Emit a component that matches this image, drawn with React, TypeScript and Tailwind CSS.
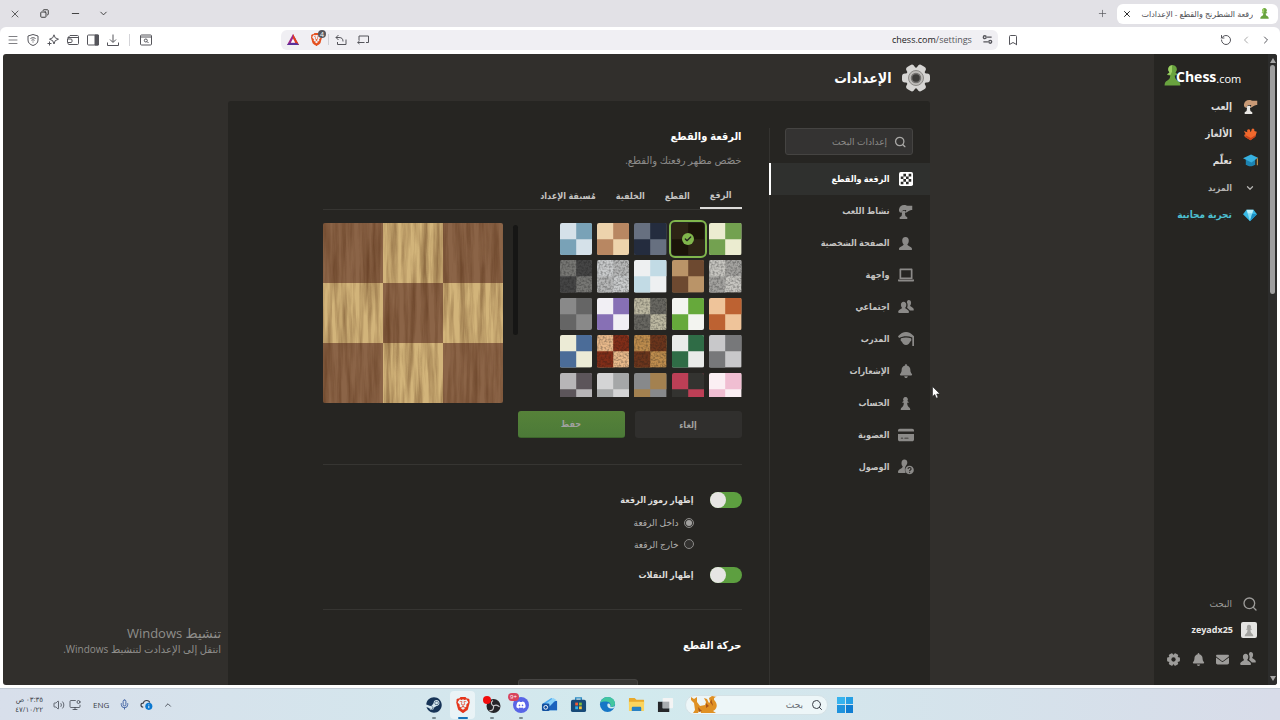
import type { ReactNode } from "react";
import {
    Bookmark,
    Check,
    ChevronDown,
    ChevronLeft,
    ChevronRight,
    ChevronUp,
    Copy,
    Menu,
    Mic,
    Minus,
    MonitorDot,
    Plus,
    RotateCcw,
    Search,
    Volume2,
    X,
} from "lucide-react";
import { FaBell, FaBrave, FaCreditCard, FaDiscord, FaEnvelope, FaSteam } from "react-icons/fa6";

// headings and links use the narrower bold cut
const bold = "font-['Open_Sans','DejaVu_Sans_Condensed',sans-serif] font-bold";

const HandPawn = ({ hand = "currentColor", pawn = "currentColor" }: { hand?: string; pawn?: string }) => (
    <svg viewBox="0 0 16 16" className="size-[15px]">
        <path fill={hand} d="M1 6C1.300 3 3.600 1 6.500 1c2 0 3 .8 5 .8h3.700v4.600c-2 0-3 .6-4.200 1.400L9 9c-.9.500-1.500-.3-1-1l1-1.700H5.500L3.400 9C2.400 9.700.900 8 1 6z" />
        <path fill={pawn} d="M5 7.200h2.400l.8 1.800-.8.800.5 3 2 1.300V16H1.800v-1.900l2-1.300.5-3-.8-.8z" />
    </svg>
);

const Friends = () => (
    <svg viewBox="0 0 16 16" className="size-4" fill="currentColor">
        <path d="M5.600 2.800c1.700 0 2.800 1.300 2.700 3.100-.1 1.300-.5 2.200-1.100 2.800.2 1.600 3.800 1.600 3.800 4.300 0 .6-.3 1-.9 1H1.100c-.6 0-.9-.4-.9-1 0-2.700 3.600-2.700 3.800-4.300-.6-.6-1-1.500-1.100-2.800 0-1.800 1-3.100 2.700-3.100z" />
        <path d="M10.600 1c1.600 0 2.600 1.200 2.500 2.900 0 1.100-.4 2-1 2.600.3 1.500 3.700 1.700 3.700 4.200 0 .6-.3.9-.8.9h-3.100c-.7-1.600-2.400-2-2.800-2.900.6-1.400.9-3.300-.2-5.100C9 2 9.500 1 10.600 1z" />
    </svg>
);

const Person = () => (
    <svg viewBox="0 0 16 16" className="size-[15px]" fill="currentColor">
        <path d="M8 1c2.300 0 3.700 1.600 3.500 4-.1 1.800-.7 3-1.500 3.800.1 2.200 5 2.200 5 5.400 0 .5-.2.800-.7.800H1.700c-.5 0-.7-.3-.7-.8 0-3.200 4.900-3.200 5-5.400C5.200 8 4.600 6.800 4.500 5 4.300 2.600 5.700 1 8 1z" />
    </svg>
);

const LaptopIcon = () => (
    <svg viewBox="0 0 16 16" className="size-4" fill="currentColor">
        <path fillRule="evenodd" d="M2.500 1.500h11c.6 0 1 .4 1 1V12h-13V2.500c0-.6.4-1 1-1zM3.200 3.200v7.200h9.600V3.200z" />
        <path d="M0 12.500h16v1c0 .7-.4 1-1 1H1c-.6 0-1-.3-1-1z" />
    </svg>
);

const Coach = () => (
    <svg viewBox="0 0 16 16" className="size-4" fill="currentColor">
        <path d="M0 5.200C2.500 2.500 5.300 1 8 1s5.500 1.500 8 4.200V15h-1.700V6.600C10 4.800 5.500 4.900 1 7z" />
        <path d="M3 7.300c3.400-1 6.600-1 10 0 .8 1.600.3 3-1 3.500-.4 2-2 3.200-4 3.200s-3.600-1.200-4-3.200c-1.300-.5-1.800-1.900-1-3.500z" />
    </svg>
);

const Access = () => (
    <svg viewBox="0 0 16 16" className="size-4" fill="currentColor">
        <path d="M6.400.5c1.800 0 3 1.300 2.900 3.100 0 1.200-.5 2.200-1.200 2.900C6.800 8 6.300 11 7.600 14H1C.3 14 0 13.600 0 13c0-3.400 4.400-3 4.700-5.600-.7-.7-1.200-1.700-1.200-2.900C3.400 1.800 4.600.5 6.400.5z" />
        <circle cx="11.500" cy="11" r="4.300" />
        <path d="M10 10c0-2 3.100-1.900 3.100-.1 0 1.100-1.500 1-1.500 2.100m0 .8v1" fill="none" stroke="#262522" strokeWidth="1.100" />
    </svg>
);

const BoardIcon = () => (
    <svg viewBox="0 0 16 16" className="size-[14px]">
        <rect width="16" height="16" rx="2" fill="#fff" />
        <path fill="#2b2b28" d="M5 2h3v3H5zM11 2h3v3h-3zM2 5h3v3H2zM8 5h3v3H8zM5 8h3v3H5zM11 8h3v3h-3zM2 11h3v3H2zM8 11h3v3H8z" />
    </svg>
);

const SmallPawn = ({ className }: { className?: string }) => (
    <svg viewBox="0 0 12 16" className={className} fill="currentColor">
        <path d="M6 1a2.600 2.600 0 0 1 2 4.300l1.400 1v.9H7.800c.1 2.500.7 3.900 2 4.900.9.700 1.400 1.500 1.400 2.900H.8c0-1.400.5-2.200 1.400-2.900 1.300-1 1.900-2.400 2-4.900H2.600v-.9l1.400-1A2.600 2.600 0 0 1 6 1z" />
    </svg>
);

const Pawn = ({ className }: { className?: string }) => (
    <svg viewBox="0 0 18 22" className={className}>
        <path
            fill="#69a33f"
            d="M9 0a4.600 4.600 0 0 1 3.200 8l2.500 1.700c0 .8-.5 1.200-3.300 1.200.1 2.600.8 4.100 3 5.300 1.900 1 3 2.500 3 5.300H.6c0-2.800 1.100-4.300 3-5.300 2.200-1.200 2.900-2.700 3-5.300-2.800 0-3.300-.4-3.300-1.200L5.800 8A4.600 4.600 0 0 1 9 0z"
        />
        <path fill="#9bcf63" d="M8.500.1A4.600 4.600 0 0 0 5.800 8L3.300 9.700l3.500.7L8.500 7z" />
    </svg>
);

const Gear = () => (
    <svg viewBox="0 0 28 28" className="size-[15px]" fill="currentColor">
        {[30, 90, 150].map((angle) => (
            <rect key={angle} x="10" y="2" width="8" height="24" rx="2" transform={`rotate(${angle} 14 14)`} />
        ))}
        <circle cx="14" cy="14" r="9" />
        <circle cx="14" cy="14" r="4" fill="#262522" />
    </svg>
);

const GearBadge = () => (
    <svg viewBox="0 0 28 28" className="size-7">
        {[30, 90, 150].map((angle) => (
            <rect key={angle} x="9.500" y="0" width="9" height="28" rx="3" fill="#d6d5d3" transform={`rotate(${angle} 14 14)`} />
        ))}
        <circle cx="14" cy="14" r="10.500" fill="#d6d5d3" />
        <circle cx="14" cy="14" r="7.500" fill="#bdbbb8" stroke="#8c8a87" />
        <circle cx="14" cy="14" r="4.500" fill="#3c3b39" stroke="#757371" strokeWidth="1.500" />
    </svg>
);

const PuzzleIcon = () => (
    <svg viewBox="0 0 16 16" className="size-[14px]">
        <path fill="#f0682d" d="M1 4.500 5 6C4 3.500 5.500 2 7 2.600c1.300.5 1.400 1.900 1 3l1.600-1c-.2-2 1-3.200 2.400-2.700 1.200.4 1.300 1.700.8 2.800l3 .8L14 11l-5.500 4-6-3.500C.8 10 1.400 8 3 8.200z" />
        <path fill="#c8431b" d="m2.500 11.500 6 3.500L14 11l.6-2L9 12.500 3 9.500z" />
    </svg>
);

const LearnIcon = () => (
    <svg viewBox="0 0 16 16" className="size-[15px]">
        <path fill="#1d83b0" d="M3 7v5c2.500 3 7.500 3 10 0V7z" />
        <path fill="#37b1e0" d="M0 5.500 8.500 1.500 16 5l-7 5z" />
        <path d="M15.300 5.500V13" stroke="#c69648" strokeWidth="1.200" />
    </svg>
);

const Diamond = () => (
    <svg viewBox="0 0 16 16" className="size-[14px]">
        <path fill="#38b8e4" d="M4 2h8l4 5-8 8-8-8z" />
        <path fill="#b9f0fc" d="M4 2h8l-1.500 4.500h-5z" />
        <path fill="#83def5" d="M5.500 6.500h5L8 15z" />
        <path fill="#1d8fc4" d="m10.500 6.500 5.500.5-8 8z" />
    </svg>
);

const mainLinks = [
    { label: "إلعب", icon: <HandPawn hand="#c99a76" pawn="#e9e7e4" /> },
    { label: "الألغاز", icon: <PuzzleIcon /> },
    { label: "تعلّم", icon: <LearnIcon /> },
    { label: "المزيد", icon: <ChevronDown className="size-[10px]" strokeWidth={3} />, tone: "text-[9px] text-[#b5b4b2]" },
    { label: "تجربة مجانية", icon: <Diamond />, tone: "text-[10px] text-[#4dbfd0]" },
];

const settingsLinks = [
    { label: "الرقعة والقطع", icon: <BoardIcon /> },
    { label: "نشاط اللعب", icon: <HandPawn /> },
    { label: "الصفحة الشخصية", icon: <Person /> },
    { label: "واجهة", icon: <LaptopIcon /> },
    { label: "اجتماعي", icon: <Friends /> },
    { label: "المدرب", icon: <Coach /> },
    { label: "الإشعارات", icon: <FaBell className="size-[14px]" /> },
    { label: "الحساب", icon: <SmallPawn className="h-[15px] w-[11px]" /> },
    { label: "العضوية", icon: <FaCreditCard className="size-4" /> },
    { label: "الوصول", icon: <Access /> },
];

const tabs = ["الرقع", "القطع", "الخلفية", "مُسبقة الإعداد"];

// [name, top-left and bottom-right colour, the other colour, grainy]
const boards: [string, string, string, boolean?][] = [
    ["أخضر", "#ebecd0", "#73a150"],
    ["خشب داكن", "#2d2415", "#1b1409"],
    ["ليلي", "#677080", "#242c3e"],
    ["بني", "#edd3ac", "#b88762"],
    ["جليد", "#d5e1e9", "#79a2b7"],
    ["صحيفة", "#c6c5c0", "#a3a29f", true],
    ["جوز", "#ba9468", "#6d4930"],
    ["سماء", "#eef0f1", "#c2dbe5"],
    ["رخام فاتح", "#c9cbcc", "#b5b6b6", true],
    ["جرافيت", "#777774", "#454545", true],
    ["برتقالي", "#efc49a", "#bd6232"],
    ["ليموني", "#f3f4f0", "#66a93b"],
    ["حجر", "#bcb8a1", "#686761", true],
    ["أرجواني", "#f1eff4", "#8770b5"],
    ["رمادي", "#898989", "#656565"],
    ["معدن", "#c8c8ca", "#77787a"],
    ["ملعب", "#e9ebe9", "#2f6c46"],
    ["خشب", "#bd8c4d", "#6b351c", true],
    ["برغندي", "#e8b98a", "#812d18", true],
    ["أزرق", "#ecebd6", "#4b6c98"],
    ["وردي", "#fbeff3", "#f0bed2"],
    ["داما", "#bd3f56", "#333330"],
    ["برونز", "#87898b", "#a38150"],
    ["زجاج", "#d4d4d5", "#a5a7a8"],
    ["ظلال", "#b7b5b7", "#5c555a"],
];

function Swatch({ light, dark, grain }: { light: string; dark: string; grain?: boolean }) {
    return (
        <svg viewBox="0 0 32 32" className="block w-full rounded-[2px]">
            <rect width="32" height="32" fill={light} />
            <path d="M16 0h16v16H16zM0 16h16v16H0z" fill={dark} />
            {grain && <rect width="32" height="32" filter="url(#grain)" opacity="0.3" />}
        </svg>
    );
}

function WoodBoard() {
    return (
        <svg viewBox="0 0 180 180" className="block w-[180px] shrink-0 rounded-[2px]">
            <defs>
                <filter id="wood" x="0" y="0" width="100%" height="100%" colorInterpolationFilters="sRGB">
                    <feTurbulence type="fractalNoise" baseFrequency="0.16 0.012" numOctaves="4" seed="7" />
                    <feColorMatrix values="0 0 0 0 0.3  0 0 0 0 0.15  0 0 0 0 0.05  2 0 0 0 -0.75" />
                </filter>
                <filter id="grain" x="0" y="0" width="100%" height="100%" colorInterpolationFilters="sRGB">
                    <feTurbulence type="fractalNoise" baseFrequency="0.5" numOctaves="2" seed="3" />
                    <feColorMatrix values="0 0 0 0 0.1  0 0 0 0 0.1  0 0 0 0 0.1  3 0 0 0 -1.2" />
                </filter>
            </defs>
            {[0, 1, 2, 3, 4, 5, 6, 7, 8].map((i) => {
                const x = (i % 3) * 60;
                const y = Math.floor(i / 3) * 60;
                return <rect key={i} x={x} y={y} width="60" height="60" fill={i % 2 ? "#d2b47a" : "#8b6447"} />;
            })}
            <rect width="180" height="180" filter="url(#wood)" opacity="0.5" />
        </svg>
    );
}

function BrowserChrome() {
    return (
        <header className="bg-[#e2e1e6] text-[#55555b]">
            <div className="flex h-[27px] items-center justify-between">
                <div className="flex items-center">
                    <div className="ms-[2px] flex h-5 w-[161px] items-center rounded-md bg-white ps-2 pe-[5px]">
                        <Pawn className="h-[11px] w-[11px]" />
                        <span className="ms-[6px] flex-1 truncate text-[8px] text-[#4b4b50]">رقعة الشطرنج والقطع - الإعدادات</span>
                        <button aria-label="إغلاق التبويب">
                            <X className="size-[10px] text-black" />
                        </button>
                    </div>
                    <button aria-label="تبويب جديد" className="ms-[9px]">
                        <Plus className="size-[11px]" strokeWidth={1.5} />
                    </button>
                </div>
                <div dir="ltr" className="flex items-center ps-[9px] text-[#333]">
                    <button aria-label="إغلاق" className="w-[31px]"><X className="size-[12px]" strokeWidth={1.5} /></button>
                    <button aria-label="استعادة" className="w-[30px]"><Copy className="size-[9px] -scale-x-100" strokeWidth={2.5} /></button>
                    <button aria-label="تصغير" className="w-[28px]"><Minus className="size-[11px]" /></button>
                    <button aria-label="القائمة"><ChevronDown className="size-[11px]" /></button>
                </div>
            </div>
            <div className="flex h-[27px] items-center rounded-t-md bg-white pb-[2px]">
                <div className="flex flex-1 items-center gap-2 ps-2">
                    <ChevronRight className="size-3" />
                    <ChevronLeft className="size-3 text-[#aaa]" />
                    <RotateCcw className="size-3" />
                    <Bookmark className="ms-auto me-[9px] size-3" />
                </div>
                <div className="flex h-5 w-[56%] items-center rounded-md bg-[#f0eff3] ps-[5px] pe-[6px]">
                    <svg viewBox="0 0 12 12" className="size-[11px]" fill="none" stroke="currentColor" strokeWidth="1.400">
                        <circle cx="3" cy="3.500" r="1.600" />
                        <circle cx="9" cy="8.500" r="1.600" />
                        <path d="M5.500 3.500h5M1.500 8.500h5" />
                    </svg>
                    <span dir="ltr" className="me-[10px] text-[9px] text-[#55555a]">
                        <span className="text-[#222]">chess.com</span>/settings
                    </span>
                    <div dir="ltr" className="me-auto flex items-center text-[#55555b]">
                        <svg viewBox="0 0 12 12" className="size-3">
                            <path d="M6 0 12 11H0z" fill="#a1278a" />
                            <path d="M6 0 12 11H9.500L6 4.500z" fill="#e0401c" />
                            <path d="m6 4.500 2.200 4.300H3.800z" fill="#fff" />
                            <path d="M0 11h12l-2-2H2z" fill="#59309a" />
                        </svg>
                        <span className="relative ms-[11px] me-[5px] block">
                            <FaBrave className="size-[13px] text-[#e5501f]" />
                            <span className="absolute -top-[3px] -right-[3px] flex size-[8px] items-center justify-center rounded-full bg-[#56565c] text-[7px] leading-none text-white">4</span>
                        </span>
                        <span className="h-[11px] w-px bg-[#cfcfd4]" />
                        <svg viewBox="0 0 12 12" className="ms-[6px] size-3" fill="none" stroke="currentColor">
                            <path d="M3.500 1 1 3.500 3.500 6M1 3.500h3c3 0 4 1.500 4 4M2.500 8v2.500H11V5.500" />
                        </svg>
                        <svg viewBox="0 0 12 12" className="ms-[10px] size-3" fill="none" stroke="currentColor">
                            <path d="M2 6.500V2h9.500v6.500H9M.5 8.500h7M2.500 7 .800 8.500 2.500 10" />
                        </svg>
                    </div>
                </div>
                <div dir="ltr" className="flex flex-1 items-center gap-2 ps-[7px]">
                    <Menu className="size-3" strokeWidth={1.5} />
                    <svg viewBox="0 0 12 12" className="size-3" fill="none" stroke="currentColor">
                        <path d="M6 .5 11 2v4c0 3-2 4.500-5 5.500C3 10.500 1 9 1 6V2zM3.500 4.500c1.500-1 3.500-1 5 0M4.500 6.300c1-.6 2-.6 3 0M6 7.500v1" />
                    </svg>
                    <svg viewBox="0 0 12 12" className="size-3" fill="none" stroke="currentColor">
                        <path d="m7 .8 1.200 3 3.300 1.400-3.300 1.500L7 10 5.700 6.700 2.500 5.200l3.200-1.400zM2.500 7.500v4M.5 9.500h4" />
                    </svg>
                    <svg viewBox="0 0 12 12" className="size-3" fill="none" stroke="currentColor">
                        <path d="M1 5V3.500L3 1.500h7.500c.6 0 1 .4 1 1v7c0 .6-.4 1-1 1H2c-.6 0-1-.4-1-1V8.500M1 3.500h10M.500 5H4c.6 0 1 .4 1 1v1.500c0 .6-.4 1-1 1H.5z" />
                    </svg>
                    <svg viewBox="0 0 12 12" className="size-3" fill="none" stroke="currentColor">
                        <rect x=".5" y="1" width="11" height="10" rx="1" />
                        <path d="M8 1h3.500v10H8z" fill="currentColor" />
                    </svg>
                    <svg viewBox="0 0 12 12" className="size-3" fill="none" stroke="currentColor">
                        <path d="M6 .5v7.500M3 5.500l3 3 3-3M.5 8.500v3h11v-3" />
                    </svg>
                    <span className="mx-[2px] h-3 w-px bg-[#d4d4d8]" />
                    <svg viewBox="0 0 12 12" className="size-3" fill="none" stroke="currentColor">
                        <rect x=".5" y="1" width="11" height="10" rx="1" />
                        <path d="M1 3h10" />
                        <circle cx="5.800" cy="6.500" r="1.500" />
                        <path d="m7 7.500 1.500 1.500" />
                    </svg>
                </div>
            </div>
        </header>
    );
}

function MainSidebar() {
    return (
        <aside className="flex w-[114px] shrink-0 flex-col bg-[#262522] text-[#dddcda]">
            <a href="#home" dir="ltr" className="mt-[9px] flex h-[24px] items-center ps-[10px] text-white">
                <Pawn className="h-[21px] w-[17px]" />
                <span className="-ms-[5px] pt-1 text-[14px] leading-none font-bold">Chess</span>
                <span className="pt-[6px] text-[11px] leading-none">.com</span>
            </a>
            <nav className="mt-[6px]">
                {mainLinks.map((link) => (
                    <a key={link.label} href="#main" className={`flex h-[27px] items-center gap-[10px] ps-[10px] ${bold} ${link.tone ?? "text-[10px]"}`}>
                        <span className="flex w-4 justify-center">{link.icon}</span>
                        {link.label}
                    </a>
                ))}
            </nav>
            <div className="mt-auto mb-[18px] text-[#9d9c9a]">
                <a href="#search" className="flex h-[26px] items-center gap-[10px] ps-[10px] text-[9px]">
                    <Search className="size-4" />
                    البحث
                </a>
                <a href="#profile" className="flex h-[26px] items-center gap-2 ps-[11px] text-[9px] font-bold text-[#e8e7e5]">
                    <span className="flex size-4 items-center justify-center rounded-[2px] bg-[#e4e4e2]">
                        <SmallPawn className="h-[13px] w-[10px] text-[#a3a3a0]" />
                    </span>
                    zeyadx25
                </a>
                <div className="mt-[8px] flex justify-between ps-3 pe-[12px]">
                    <button aria-label="الأصدقاء"><Friends /></button>
                    <button aria-label="الرسائل"><FaEnvelope className="size-[13px]" /></button>
                    <button aria-label="الإشعارات"><FaBell className="size-[13px]" /></button>
                    <button aria-label="الإعدادات"><Gear /></button>
                </div>
            </div>
        </aside>
    );
}

function SettingsNav() {
    return (
        <div className="flex w-[161px] shrink-0 flex-col pt-[27px]">
            <div className="flex-1 border-e border-[#343330]">
                <label className="ms-[17px] flex h-[27px] w-[128px] items-center rounded-[3px] border border-[#454442] bg-[#343332] ps-[5px]">
                    <Search className="size-[14px] text-[#a8a7a5]" strokeWidth={2.5} />
                    <input
                        type="search"
                        placeholder="إعدادات البحث"
                        aria-label="إعدادات البحث"
                        className="w-full bg-transparent ps-[7px] text-[9px] outline-none placeholder:text-[#8b8a88]"
                    />
                </label>
                <nav className="mt-2 -me-px">
                    {settingsLinks.map((link, i) => (
                        <a
                            key={link.label}
                            href="#settings"
                            className={`flex h-8 items-center gap-2 ps-4 text-[9px] ${bold} ${
                                i === 0 ? "border-e-2 border-white bg-[#2f302e] text-white" : "text-[#c5c4c2]"
                            }`}
                        >
                            <span className={`flex w-4 justify-center ${i === 0 ? "" : "text-[#8b8a88]"}`}>{link.icon}</span>
                            {link.label}
                        </a>
                    ))}
                </nav>
            </div>
        </div>
    );
}

function Toggle({ label }: { label: string }) {
    return (
        <label className={`flex h-4 items-center gap-4 text-[9px] text-[#dddcda] ${bold}`}>
            <input
                type="checkbox"
                role="switch"
                defaultChecked
                className="flex h-4 w-8 appearance-none justify-end rounded-full bg-[#5d9f40] before:size-4 before:rounded-full before:bg-[#e6e5e3] before:content-['']"
            />
            {label}
        </label>
    );
}

function Radio({ label, checked }: { label: string; checked?: boolean }) {
    return (
        <label className="flex items-center gap-[5px] text-[9px] text-[#b3b2b0]">
            <input
                type="radio"
                name="coordinates"
                defaultChecked={checked}
                className="flex size-[10px] appearance-none items-center justify-center rounded-full border border-[#8b8a88] bg-[#333230] checked:before:size-[6px] checked:before:rounded-full checked:before:bg-[#a3a2a0] checked:before:content-['']"
            />
            {label}
        </label>
    );
}

function BoardSettings() {
    return (
        <section className="min-w-0 flex-1 ps-[27px] pe-[95px] pt-[25px]">
            <h2 className={`text-[11px] leading-5 text-white ${bold}`}>الرقعة والقطع</h2>
            <p className="mt-[6px] text-[10px] leading-4 text-[#8d8c8a]">خصّص مظهر رقعتك والقطع.</p>
            <div role="tablist" className={`mt-[14px] flex border-b border-[#363532] text-[9px] text-[#c5c4c2] ${bold}`}>
                {tabs.map((tab, i) => (
                    <button
                        key={tab}
                        role="tab"
                        aria-selected={i === 0}
                        className={`h-[27px] px-[10px] ${i === 0 ? "border-b-2 border-[#dddcda]" : ""}`}
                    >
                        {tab}
                    </button>
                ))}
            </div>
            <div className="mt-[9px] flex justify-between">
                <div className="-ms-1 h-[178px] overflow-hidden p-1">
                    <div className="grid w-[182px] grid-cols-5 gap-[5px]">
                        {boards.map(([name, light, dark, grain], i) => (
                            <button
                                key={name}
                                aria-label={name}
                                className={`relative ${i === 1 ? "rounded-[3px] outline-2 outline-offset-1 outline-[#81b64c]" : ""}`}
                            >
                                <Swatch light={light} dark={dark} grain={grain} />
                                {i === 1 && (
                                    <span className="absolute inset-0 m-auto flex size-3 items-center justify-center rounded-full bg-[#81b64c]">
                                        <Check className="size-2 text-[#262522]" strokeWidth={4} />
                                    </span>
                                )}
                            </button>
                        ))}
                    </div>
                </div>
                <div className="flex items-start gap-[10px]">
                    <div className="mt-[6px] h-[110px] w-[5px] rounded-full bg-[#161615]" />
                    <div className="mt-1">
                        <WoodBoard />
                    </div>
                </div>
            </div>
            <div className={`mt-2 flex justify-between pe-[195px] text-[9px] text-[#a3a2a0] ${bold}`}>
                <button className="h-[27px] w-[107px] rounded-[3px] bg-[#302f2d]">إلغاء</button>
                <button className="h-[27px] w-[107px] rounded-[3px] border-b border-[#3d652c] bg-linear-to-b from-[#568239] to-[#4c7a38]">حفظ</button>
            </div>
            <div className="mt-[26px] border-t border-[#363532] pt-[27px]">
                <Toggle label="إظهار رموز الرقعة" />
                <div className="mt-2 flex flex-col gap-2 ps-12">
                    <Radio label="داخل الرقعة" checked />
                    <Radio label="خارج الرقعة" />
                </div>
                <div className="mt-4">
                    <Toggle label="إظهار النقلات" />
                </div>
            </div>
            <div className="mt-[26px] border-t border-[#363532] pt-[25px]">
                <h2 className={`text-[11px] leading-5 text-white ${bold}`}>حركة القطع</h2>
                <div className="mt-[24px] ps-[104px]">
                    <select aria-label="حركة القطع" className="h-[27px] w-[120px] appearance-none rounded-[3px] border border-[#454442] bg-[#383735]" />
                </div>
            </div>
        </section>
    );
}

function TaskItem({ label, running, active, children }: { label: string; running?: boolean; active?: boolean; children: ReactNode }) {
    return (
        <button aria-label={label} className={`relative flex h-7 w-[25px] items-center justify-center rounded ${active ? "bg-white/50" : ""}`}>
            {children}
            {running && <span className={`absolute bottom-0 h-[2px] rounded-full ${active ? "w-[10px] bg-[#1672b8]" : "w-1 bg-[#7c8c92]"}`} />}
        </button>
    );
}

function Taskbar() {
    return (
        <footer dir="ltr" className="grid h-8 shrink-0 grid-cols-[1fr_auto_1fr] items-center border-t border-[#c3ccd6] bg-linear-to-r from-[#d8dfeb] via-[#d2eaee] to-[#d8dce9] text-[#3a3f48]">
            <div className="flex items-center ps-3">
                <div dir="rtl" className="w-[31px] text-[7px] leading-[10px]">
                    <div>٠٣:٣٥ ص</div>
                    <div>٤٧/١٠/٢٢</div>
                </div>
                <Volume2 className="ms-[10px] size-3" strokeWidth={1.5} />
                <MonitorDot className="ms-[4px] size-3" strokeWidth={1.5} />
                <span className="ms-[12px] text-[8px]">ENG</span>
                <Mic className="ms-[10px] size-[11px] text-[#3a5da0]" />
                <svg viewBox="0 0 14 14" className="ms-[10px] size-[13px]">
                    <path d="M3.500 10C0 9.500.5 5.500 3.500 5.500 4.500 1.500 10 2 10.500 5" fill="none" stroke="#3a3f48" strokeWidth="1.200" />
                    <circle cx="9.500" cy="9" r="3.800" fill="#0b78d0" />
                    <path d="M9.500 8.500v2.500m0-4v.8" stroke="#fff" />
                </svg>
                <ChevronUp className="ms-[10px] size-[10px]" />
            </div>
            <div className="flex items-center gap-1 pe-[6px]">
                <TaskItem label="Steam" running><FaSteam className="size-4 text-[#173457]" /></TaskItem>
                <TaskItem label="Brave" running active><FaBrave className="size-4 text-[#e5361c]" /></TaskItem>
                <TaskItem label="OBS" running>
                    <svg viewBox="0 0 18 18" className="size-[18px]">
                        <circle cx="10.500" cy="10" r="7" fill="#252428" />
                        <path d="M10 4.500c-2.500 1.500-2 4 .5 5.500m6 1c-2-2.500-4.500-2-6-1m-4 4.500c3 .5 4.500-1.500 4-4.500" fill="none" stroke="#c9c9cb" strokeWidth="1.200" />
                        <circle cx="4" cy="4" r="4" fill="#f20c0c" />
                    </svg>
                </TaskItem>
                <TaskItem label="Discord" running>
                    <span className="flex size-4 items-center justify-center rounded-full bg-[#5865e6]">
                        <FaDiscord className="size-[10px] text-white" />
                    </span>
                    <span className="absolute top-[2px] left-0 rounded-full bg-[#d8445c] px-[2px] text-[6px] leading-[8px] text-white">9+</span>
                </TaskItem>
                <TaskItem label="Mail">
                    <svg viewBox="0 0 18 18" className="size-[17px]">
                        <path fill="#4ca9f0" d="m2 8 9-6 6 4v9H4z" />
                        <path fill="#1b62bd" d="m5 8 12-3v10H5z" />
                        <path fill="#8bd2fa" d="m4 9 9-7 3 2-7 7z" />
                        <rect x="1" y="8" width="8" height="8" rx="1.500" fill="#1250a0" />
                        <circle cx="5" cy="12" r="2" fill="none" stroke="#fff" />
                    </svg>
                </TaskItem>
                <TaskItem label="Store">
                    <svg viewBox="0 0 18 18" className="size-[17px]">
                        <path d="M6 5V2h6v3" fill="none" stroke="#2f8cc4" strokeWidth="1.500" />
                        <rect x="1" y="4" width="16" height="13" rx="2" fill="#174a78" />
                        <path fill="#f05a36" d="M5.500 7h3v3h-3z" />
                        <path fill="#81bd3c" d="M9.500 7h3v3h-3z" />
                        <path fill="#2db1ea" d="M5.500 11h3v3h-3z" />
                        <path fill="#f6c035" d="M9.500 11h3v3h-3z" />
                    </svg>
                </TaskItem>
                <TaskItem label="Edge">
                    <svg viewBox="0 0 18 18" className="size-[17px]">
                        <circle cx="9" cy="9" r="8" fill="#1676c6" />
                        <path fill="#42c6a0" d="M1.500 7C3 2.500 6 1 9 1c5 0 8 3.500 8 7 0 3-2.500 4-5 3.500 1-3-.5-5-3-5.500-3-.5-6 0-7.500 1z" />
                        <path fill="#d2ebef" d="M9.500 8c-1.500 1.500-.5 5 3 5.300 1.700.1 3-.4 4-1v-2c-1 1.500-3 1.700-4.500 1.200.5-1.500-.5-4-2.500-3.500z" />
                    </svg>
                </TaskItem>
                <TaskItem label="Explorer">
                    <svg viewBox="0 0 18 18" className="size-[17px]">
                        <path fill="#e9a92a" d="M1 3c0-1 .5-1 1-1h5l2 2h7c1 0 1 .5 1 1v4H1z" />
                        <path fill="#fbd45d" d="M1 6h16v9c0 1-.5 1-1 1H2c-1 0-1-.5-1-1z" />
                        <path fill="#2781c4" d="M4 16v-3c0-1 .5-1.500 1.500-1.500h7c1 0 1.500.5 1.500 1.500v3z" />
                    </svg>
                </TaskItem>
                <TaskItem label="Task view">
                    <svg viewBox="0 0 18 18" className="size-[17px]">
                        <rect x="6" y="2" width="11" height="11" rx="1" fill="#f4f4f4" />
                        <path fill="#26272a" d="M1 6h5v7h7v4H1z" />
                        <path fill="#a9adb0" d="M6 6h7v7H6z" />
                    </svg>
                </TaskItem>
                <label dir="rtl" className="me-[3px] flex h-[20px] w-[143px] items-center rounded-full border border-[#d5e2e6] bg-[#edf6f8] ps-1">
                    <Search className="size-3" />
                    <input type="search" placeholder="بحث" aria-label="بحث" className="w-20 min-w-0 flex-1 bg-transparent ps-2 text-[9px] outline-none placeholder:text-[#666b72]" />
                    <svg viewBox="0 0 28 18" className="me-1 h-[18px] w-[28px]">
                        <path fill="#e09124" d="M1 1l3 2 3-2v5l3 4 5-1 1-3-2-4 3 1 2 4 1-1-1-4 3-2 5 1c-3 0-4 2-2 4 3 4 2 8-2 10l3 2H11l-1-4-2 4H3l2-3-1-7-3-3z" />
                        <path fill="#a9571a" d="m8 11 4 4-3 1zm8-4 3 3-3 2zM22 3c-1 3 1 4 1 7l-3-4z" />
                    </svg>
                </label>
                <button aria-label="Start" className="ms-[5px] grid size-4 grid-cols-2 gap-px">
                    <span className="h-full bg-[#36b3ee]" />
                    <span className="h-full bg-[#259fe4]" />
                    <span className="h-full bg-[#1e93dd]" />
                    <span className="h-full bg-[#0f7dd2]" />
                </button>
            </div>
        </footer>
    );
}

export default function App() {
    return (
        <div dir="rtl" className="relative flex h-screen flex-col overflow-hidden bg-white font-['Open_Sans','DejaVu_Sans',sans-serif]">
            <BrowserChrome />
            <div className="mx-[3px] mb-[3px] flex min-h-0 flex-1 overflow-hidden rounded-[3px] bg-[#312f2c]">
                <div className="flex w-[9px] shrink-0 flex-col items-center justify-between bg-[#2c2c2b] py-1">
                    <span className="border-x-[3px] border-b-[5px] border-x-transparent border-b-[#a5a5a5]" />
                    <span className="mt-[2px] mb-auto h-[229px] w-[5px] rounded-full bg-[#9f9f9f]" />
                    <span className="border-x-[3px] border-t-[5px] border-x-transparent border-t-[#a5a5a5]" />
                </div>
                <MainSidebar />
                <main className="mx-auto w-full max-w-[702px]">
                    <h1 className={`flex h-[47px] items-center gap-[10px] text-[14px] text-white ${bold}`}>
                        <GearBadge />
                        الإعدادات
                    </h1>
                    <div className="flex min-h-full rounded-t-[3px] bg-[#262522]">
                        <SettingsNav />
                        <BoardSettings />
                    </div>
                </main>
            </div>
            <Taskbar />
            <div className="absolute bottom-[64px] left-[63px] w-[158px] text-[#8f8e8b]">
                <div className="text-[13px] leading-[17px] whitespace-nowrap">تنشيط Windows</div>
                <div className="text-[10px] leading-[14px] whitespace-nowrap">انتقل إلى الإعدادت لتنشيط Windows.</div>
            </div>
            <svg viewBox="0 0 9 13" className="absolute top-[386px] left-[932px] h-[13px] w-[9px]">
                <path d="M.5.5v10l2.300-2 1.500 3.700 1.800-.8L4.700 8H8z" fill="#fff" stroke="#222" strokeWidth=".6" />
            </svg>
        </div>
    );
}
